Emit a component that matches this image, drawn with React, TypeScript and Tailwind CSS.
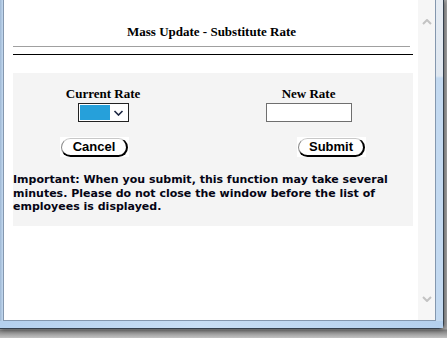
export default function App() {
  return (
    <div className="h-[338px] w-[447px] overflow-hidden bg-[linear-gradient(180deg,#a9a9a9_0px,#a9a9a9_329px,#7d7d7d_330px,#c2c2c2_338px)]">
      {/* window frame */}
      <div className="flex h-[329px] w-[444px] flex-col rounded-br-[5px] border-r border-b border-[#35404d] bg-[#bcd5ef] shadow-[1px_1px_4px_rgba(0,0,0,0.45)]">
        <div className="flex min-h-0 flex-1">
          <div className="w-[3px] bg-[linear-gradient(90deg,#9fb8d4,#c3d9f0)]" />
          <div className="flex flex-1 border-r border-b border-l border-[#8497ae] bg-white">
            {/* page */}
            <div className="flex-1 pl-[9px] font-['Liberation_Serif',serif] text-black">
              <div className="w-[397px] pt-[24px] text-center text-[13px] font-bold leading-[15px]">
                Mass Update - Substitute Rate
              </div>
              <div className="mt-[7px] h-px w-[397px] bg-[#a0a0a0]" />
              <div className="mt-[7px] h-px w-[400px] bg-black" />

              <div className="mt-[18px] h-[153px] w-[400px] bg-[#f4f4f4] pt-[13px]">
                <div className="flex">
                  <div className="flex w-[181px] flex-col items-center">
                    <span className="text-[13px] font-bold leading-[15px]">Current Rate</span>
                    <div className="mt-[2px] flex h-[19px] w-[51px] items-center border border-[#222] bg-white p-px">
                      <div className="h-full w-[30px] bg-[#26a0da]" />
                      <svg viewBox="0 0 10 6" className="ml-[3px] h-[6px] w-[11px]">
                        <path d="M1 1 L5 5 L9 1" fill="none" stroke="#1b2540" strokeWidth="1.6" />
                      </svg>
                    </div>
                  </div>
                  <div className="ml-[11px] flex w-[210px] flex-col items-center">
                    <span className="text-[13px] font-bold leading-[15px]">New Rate</span>
                    <div className="mt-[2px] h-[19px] w-[86px] border border-[#6f6f6f] bg-white" />
                  </div>
                </div>

                <div className="mt-[15px] flex">
                  <PillButton label="Cancel" className="ml-[47px]" />
                  <PillButton label="Submit" className="ml-[168px]" />
                </div>

                <p className="mt-[16px] font-['DejaVu_Sans',sans-serif] text-[11px] font-bold leading-[13.5px] text-[#050514]">
                  Important: When you submit, this function may take several
                  <br />
                  minutes. Please do not close the window before the list of
                  <br />
                  employees is displayed.
                </p>
              </div>
            </div>

            {/* scrollbar */}
            <div className="flex w-[17px] flex-col items-center justify-between bg-[#f6f6f6] pt-[19px] pb-[18px]">
              <svg viewBox="0 0 10 6" className="h-[6px] w-[10px]">
                <path d="M1 5 L5 1 L9 5" fill="none" stroke="#c3c3c3" strokeWidth="2" />
              </svg>
              <svg viewBox="0 0 10 6" className="h-[6px] w-[10px]">
                <path d="M1 1 L5 5 L9 1" fill="none" stroke="#c3c3c3" strokeWidth="2" />
              </svg>
            </div>
          </div>
          <div className="w-[7px] bg-[linear-gradient(180deg,#e6ecf3_0px,#dfe7f0_76px,#c3d9f0_78px,#c3d9f0_100%)]" />
        </div>
        <div className="h-[7px] bg-[linear-gradient(90deg,#b4d0ee,#c8def4_45%,#b4d0ee)]" />
      </div>
    </div>
  );
}

function PillButton({ label, className }: { label: string; className?: string }) {
  return (
    <div className={`flex h-[20px] w-[69px] items-center justify-center bg-white ${className ?? ""}`}>
      <div className="flex h-[19px] w-[67px] items-center justify-center rounded-full border border-t-[#c8c8c8] border-l-[#8a8a8a] border-r-2 border-b-2 border-r-black border-b-black font-['Liberation_Sans',sans-serif] text-[13px] font-bold leading-none text-black">
        {label}
      </div>
    </div>
  );
}
